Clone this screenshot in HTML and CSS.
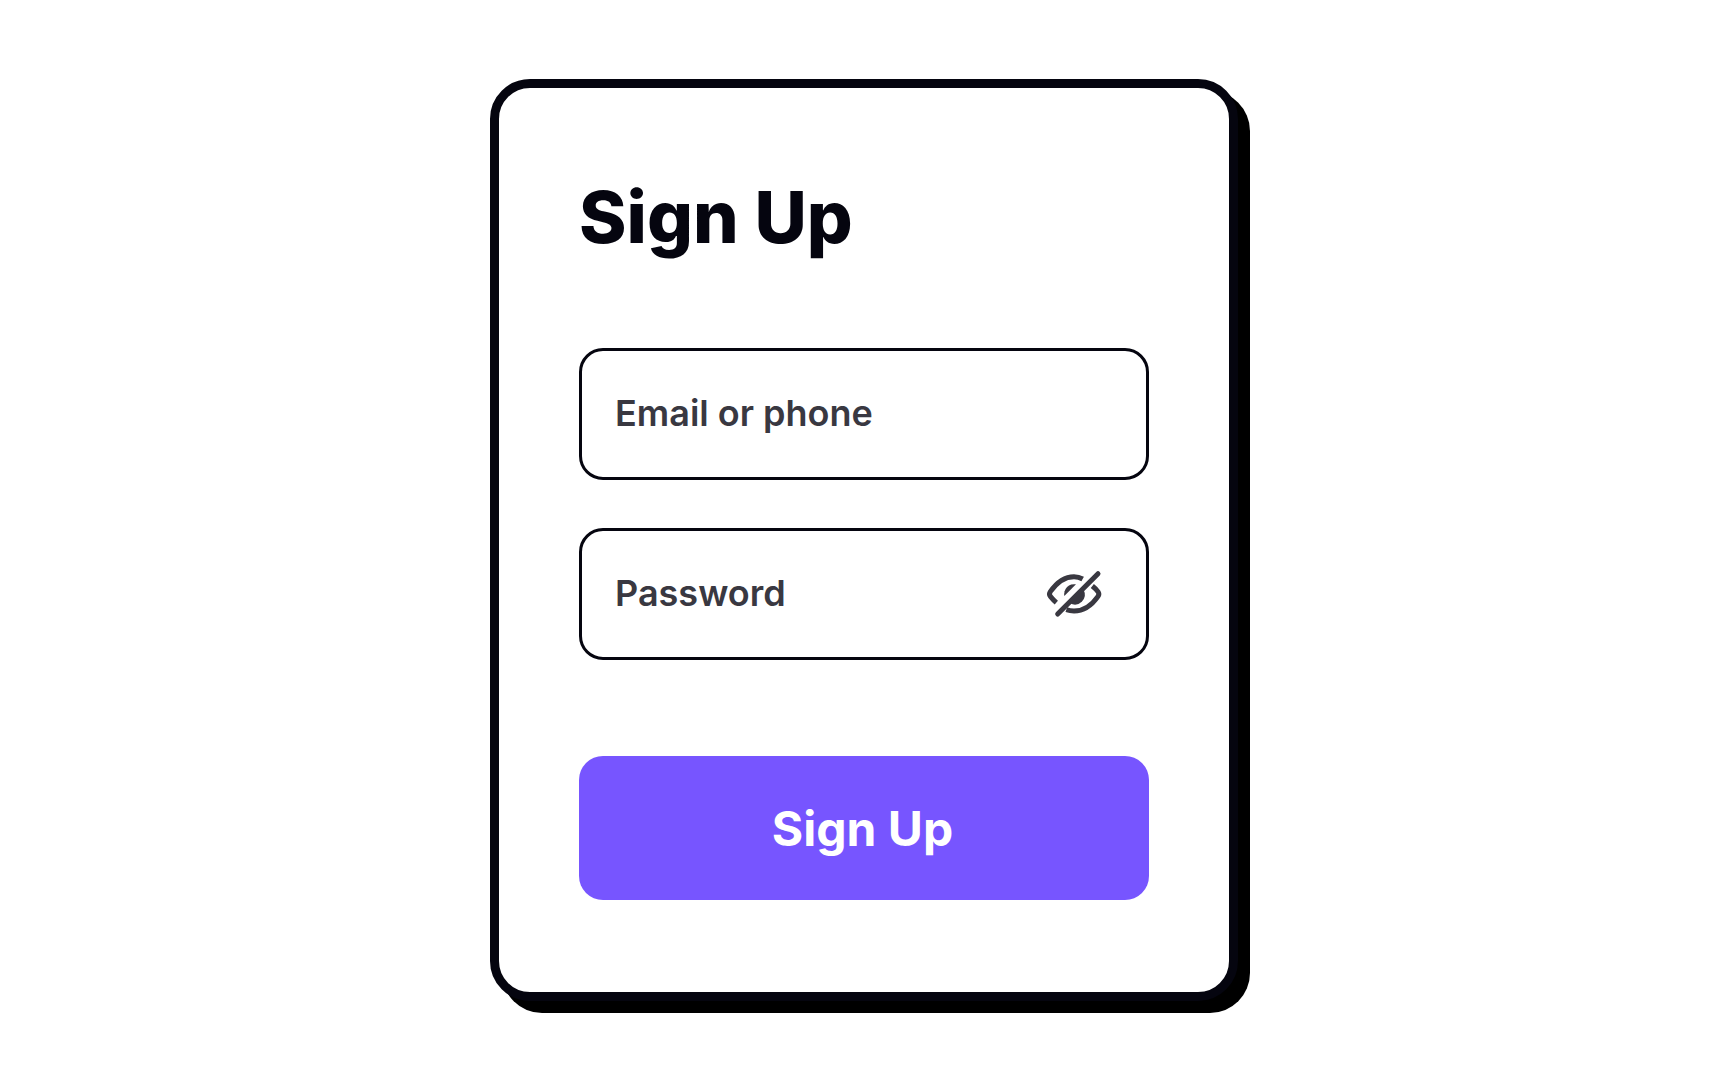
FILE: index.html
```html
<!DOCTYPE html>
<html lang="en">
<head>
<meta charset="utf-8">
<meta name="viewport" content="width=device-width, initial-scale=1">
<title>Sign Up</title>
<link rel="stylesheet" href="styles.css">
</head>
<body>
<main class="page">
  <form class="card">
    <h1 class="title">Sign Up</h1>
    <div class="fields">
      <div class="field">
        <input class="field-input" type="text" aria-label="Email or phone" placeholder="Email or phone">
      </div>
      <div class="field">
        <input class="field-input" type="password" aria-label="Password" placeholder="Password">
        <button class="toggle" type="button" aria-label="Show password">
          <svg class="toggle-icon" viewBox="0 0 180 156" fill="none" stroke="currentColor" stroke-width="15" stroke-linecap="butt" stroke-linejoin="round" aria-hidden="true">
            <path d="M37 104C30 98 24 91 19 85Q14 78 19 71C37 45 61 26 90 26Q104 26 116 33"/>
            <path d="M145 54Q155 62 162 71Q167 78 162 85C144 111 120 129 90 129Q78 129 67 125"/>
            <path d="M61 84A30 30 0 0 1 96 49Z" fill="currentColor" stroke="none"/>
            <path d="M119 66A30 30 0 0 1 78 106Z" fill="currentColor" stroke="none"/>
            <path d="M41 138L162 17" stroke-linecap="round"/>
          </svg>
        </button>
      </div>
    </div>
    <button class="submit" type="button">Sign Up</button>
  </form>
</main>
</body>
</html>
```
FILE: styles.css
```css
* {
  box-sizing: border-box;
}

body {
  margin: 0;
  background: #fff;
  color: #05050f;
  font-family: Inter, "Liberation Sans", sans-serif;
}

.page {
  display: grid;
  place-items: center;
  min-height: 100vh;
  padding: 24px;
}

.card {
  width: 100%;
  max-width: 748px;
  padding: 80px 80px 92px;
  border: 9px solid #05050f;
  border-radius: 40px;
  background: #fff;
  box-shadow: 12px 12px 0 #000;
}

.title {
  margin: 0 0 82px;
  font-size: 72px;
  font-weight: 800;
  line-height: 98px;
}

.fields {
  display: grid;
  grid-template-columns: minmax(0, 1fr);
  gap: 48px;
  margin-bottom: 96px;
}

.field {
  display: flex;
  align-items: center;
  height: 132px;
  padding: 0 42px 0 33px;
  border: 3px solid #05050f;
  border-radius: 24px;
}

.field-input {
  flex: 1;
  min-width: 0;
  padding: 0 0 2px;
  border: 0;
  outline: 0;
  background: none;
  color: #393841;
  font: inherit;
  font-size: 36px;
  font-weight: 600;
  line-height: 48px;
}

.field-input::placeholder {
  color: #393841;
  opacity: 1;
}

.toggle {
  display: flex;
  padding: 0;
  border: 0;
  background: none;
  color: #393841;
}

.toggle-icon {
  width: 60px;
  height: 52px;
}

.submit {
  display: block;
  width: 100%;
  height: 144px;
  padding: 0 3px 0 0;
  border: 0;
  border-radius: 24px;
  background: #7755ff;
  color: #fff;
  font: inherit;
  font-size: 48px;
  font-weight: 700;
}
```
